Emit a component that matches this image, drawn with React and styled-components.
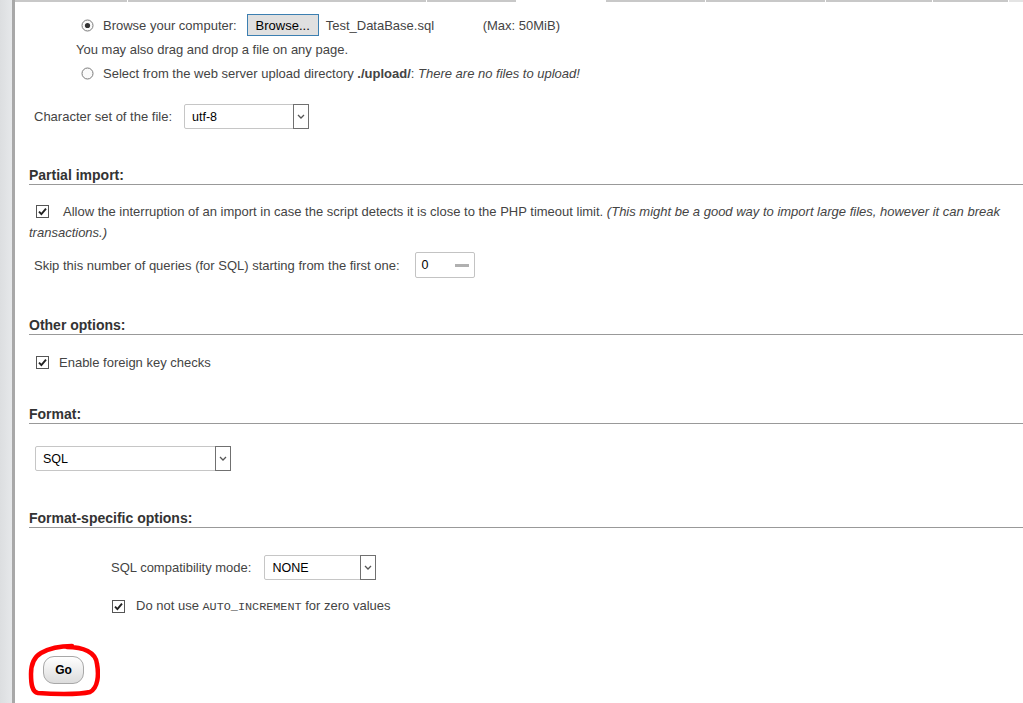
import React from 'react';
import styled, { createGlobalStyle } from 'styled-components';

const GlobalStyle = createGlobalStyle`
	html, body {
		margin: 0;
		padding: 0;
		background: #fff;
	}
	body {
		font-family: "Liberation Sans", Arial, sans-serif;
		font-size: 13px;
		color: #444;
	}
`;

const tabs = [
	{ width: 112 },
	{ width: 298 },
	{ width: 89 },
	{ width: 88, active: true },
	{ width: 99 },
	{ width: 119 },
	{ width: 106 },
	{ width: 75 },
	{ width: 17, light: true },
];

const Radio = ({ checked }) => (
	<RadioBox width="13" height="13" viewBox="0 0 13 13">
		<circle cx="6.5" cy="6.5" r="5.5" fill="#fafafa" stroke="#7a7a7a" />
		{checked && <circle cx="6.5" cy="6.5" r="2.6" fill="#333" />}
	</RadioBox>
);

const Check = ({ gap, lead }) => (
	<CheckBox width="13" height="13" viewBox="0 0 13 13" gap={gap} lead={lead}>
		<rect x="0.5" y="0.5" width="12" height="12" fill="#fff" stroke="#555" />
		<path
			d="M3 6.6 L5.4 9.1 L10 3.6"
			fill="none"
			stroke="#222"
			strokeWidth="1.9"
		/>
	</CheckBox>
);

const Select = ({ value, width }) => (
	<SelectBox width={width}>
		<span>{value}</span>
		<SelectArrow>
			<svg width="8" height="5" viewBox="0 0 8 5">
				<path d="M1 1 L4 4 L7 1" fill="none" stroke="#555" strokeWidth="1.3" />
			</svg>
		</SelectArrow>
	</SelectBox>
);

class App extends React.Component {
	render() {
		return (
			<Page>
				<GlobalStyle />
				<Sidebar />
				<Main>
					<TabStrip>
						{tabs.map((t, i) => (
							<Tab key={i} width={t.width} active={t.active} light={t.light} />
						))}
					</TabStrip>
					<Content>
						<Upload>
							<Row height={24} indent={52}>
								<Radio checked />
								<Label gap={9}>Browse your computer:</Label>
								<BrowseButton>Browse...</BrowseButton>
								<FileName>Test_DataBase.sql</FileName>
								<span>(Max: 50MiB)</span>
							</Row>
							<Row height={24} indent={47}>
								You may also drag and drop a file on any page.
							</Row>
							<Row height={24} indent={52}>
								<Radio />
								<Label gap={9}>
									Select from the web server upload directory <b>./upload/</b>:{' '}
									<i>There are no files to upload!</i>
								</Label>
							</Row>
						</Upload>

						<Row height={25} indent={5} top={19}>
							<Label>Character set of the file:</Label>
							<Spacer w={12} />
							<Select value="utf-8" width={125} />
						</Row>

						<Heading top={37}>Partial import:</Heading>
						<Para top={16}>
							<Check lead={7} gap={14} />
							Allow the interruption of an import in case the script detects it is
							close to the PHP timeout limit.{' '}
							<i>
								(This might be a good way to import large files, however it can
								break transactions.)
							</i>
						</Para>
						<Row height={26} indent={5} top={9}>
							<Label>Skip this number of queries (for SQL) starting from the first one:</Label>
							<Spacer w={15} />
							<NumberInput>
								<span>0</span>
								<Spinner />
							</NumberInput>
						</Row>

						<Heading top={38}>Other options:</Heading>
						<Row height={20} indent={7} top={17}>
							<Check gap={10} />
							<Label>Enable foreign key checks</Label>
						</Row>

						<Heading top={33}>Format:</Heading>
						<Row height={25} indent={6} top={22}>
							<Select value="SQL" width={196} />
						</Row>

						<Heading top={38}>Format-specific options:</Heading>
						<Row height={25} indent={82} top={27}>
							<Label>SQL compatibility mode:</Label>
							<Spacer w={13} />
							<Select value="NONE" width={112} />
						</Row>
						<Row height={20} indent={83} top={16}>
							<Check gap={11} />
							<Label>
								Do not use <Code>AUTO_INCREMENT</Code> for zero values
							</Label>
						</Row>

						<Row height={28} indent={14} top={40}>
							<GoWrap>
								<GoButton>Go</GoButton>
								<Scribble width="72" height="58" viewBox="0 0 72 58">
									<path
										d="M39 5 C55 5, 68 10, 69 22 C71 33, 70 46, 62 50 C50 53, 22 52, 10 51 C4 50, 3 42, 3 32 C3 22, 6 15, 13 11 C20 7, 30 4, 44 4"
										fill="none"
										stroke="#f00"
										strokeWidth="4.5"
										strokeLinecap="round"
										strokeLinejoin="round"
									/>
								</Scribble>
							</GoWrap>
						</Row>
					</Content>
				</Main>
			</Page>
		);
	}
}

export default App;

const Page = styled.div`
	display: flex;
	min-height: 703px;
	overflow: hidden;
`;

const Sidebar = styled.div`
	width: 12px;
	flex-shrink: 0;
	background: linear-gradient(to right, #dcdee0, #e6e8ea);
	border-right: 3px solid #a8a8a8;
`;

const Main = styled.div`
	flex: 1;
	min-width: 0;
`;

const TabStrip = styled.div`
	display: flex;
	height: 2px;
	gap: 1px;
`;

const Tab = styled.div`
	width: ${(props) => props.width}px;
	flex-shrink: 0;
	background: ${(props) =>
		props.active ? 'transparent' : props.light ? '#e4e4e4' : '#c8c8c8'};
`;

const Content = styled.div`
	display: flex;
	flex-direction: column;
	padding-left: 14px;
`;

const Upload = styled.div`
	display: flex;
	flex-direction: column;
	margin-top: 11px;
`;

const Row = styled.div`
	display: flex;
	align-items: center;
	height: ${(props) => props.height}px;
	margin-top: ${(props) => props.top || 0}px;
	padding-left: ${(props) => props.indent || 0}px;
	white-space: nowrap;
`;

const Label = styled.span`
	margin-left: ${(props) => props.gap || 0}px;
`;

const Spacer = styled.span`
	width: ${(props) => props.w}px;
	flex-shrink: 0;
`;

const RadioBox = styled.svg`
	display: block;
	flex-shrink: 0;
`;

const CheckBox = styled.svg`
	display: inline-block;
	vertical-align: -2px;
	flex-shrink: 0;
	margin-left: ${(props) => props.lead || 0}px;
	margin-right: ${(props) => props.gap || 10}px;
`;

const BrowseButton = styled.span`
	display: flex;
	align-items: center;
	justify-content: center;
	box-sizing: border-box;
	width: 72px;
	height: 22px;
	margin-left: 10px;
	background: #e0e0e0;
	border: 1px solid #3c7fb1;
	color: #000;
`;

const FileName = styled.span`
	width: 157px;
	margin-left: 7px;
`;

const SelectBox = styled.div`
	position: relative;
	display: flex;
	align-items: center;
	box-sizing: border-box;
	width: ${(props) => props.width}px;
	height: 25px;
	padding-left: 7px;
	border: 1px solid #c6c6c6;
	border-radius: 2px;
	background: #fff;
	color: #000;
	font-size: 12.5px;
`;

const SelectArrow = styled.div`
	position: absolute;
	top: -1px;
	right: -1px;
	bottom: -1px;
	width: 16px;
	display: flex;
	align-items: center;
	justify-content: center;
	box-sizing: border-box;
	border: 1px solid #707070;
	background: #fff;
`;

const Heading = styled.h3`
	margin: ${(props) => props.top}px 0 0;
	height: 18px;
	line-height: 18px;
	font-size: 14px;
	font-weight: bold;
	color: #333;
	border-bottom: 1px solid #999;
`;

const Para = styled.p`
	margin: ${(props) => props.top}px 0 0;
	line-height: 21px;
`;

const NumberInput = styled.div`
	display: flex;
	align-items: center;
	justify-content: space-between;
	box-sizing: border-box;
	width: 60px;
	height: 26px;
	padding: 0 5px 0 6px;
	border: 1px solid #c3c3c3;
	border-radius: 2px;
	color: #000;
	font-size: 12.5px;
`;

const Spinner = styled.span`
	width: 14px;
	height: 3px;
	background: #b0b0b0;
`;

const Code = styled.code`
	font-family: "Liberation Mono", "Courier New", monospace;
	font-size: 11.8px;
	color: #444;
`;

const GoWrap = styled.div`
	position: relative;
	display: flex;
`;

const GoButton = styled.span`
	display: flex;
	align-items: center;
	justify-content: center;
	box-sizing: border-box;
	width: 41px;
	height: 28px;
	border: 1px solid #a8a8a8;
	border-radius: 11px;
	background: linear-gradient(#ffffff, #dcdcdc);
	color: #000;
	font-size: 12px;
	font-weight: bold;
`;

const Scribble = styled.svg`
	position: absolute;
	left: -15px;
	top: -14px;
	pointer-events: none;
`;
